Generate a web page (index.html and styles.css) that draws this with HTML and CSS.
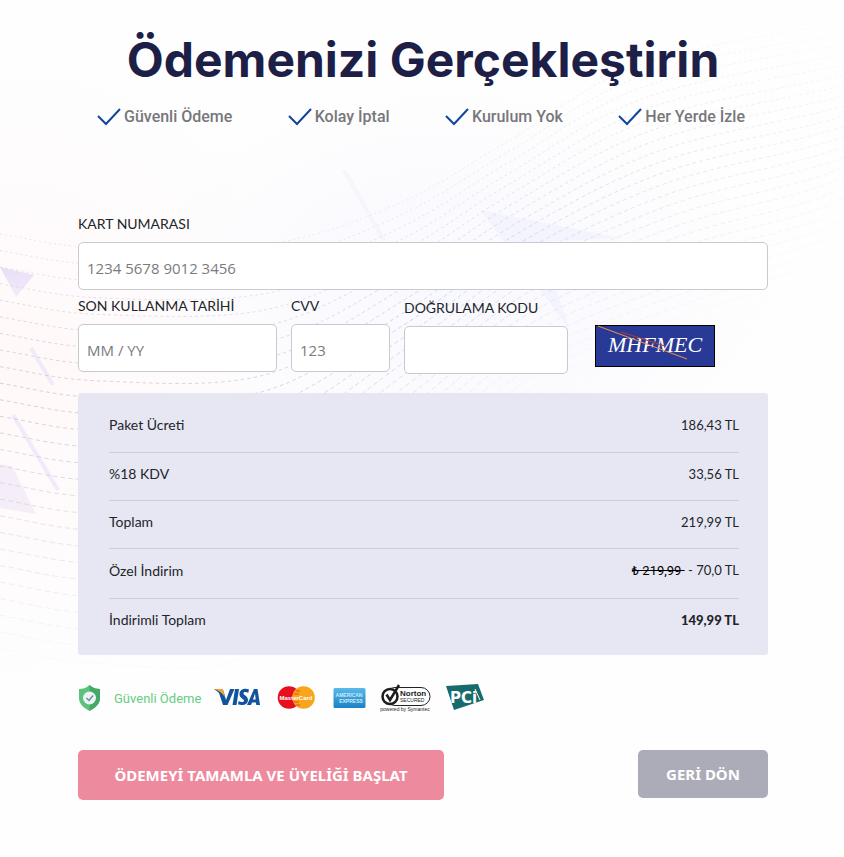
FILE: index.html
```html
<!DOCTYPE html>
<html lang="tr">
<head>
<meta charset="utf-8">
<meta name="viewport" content="width=device-width, initial-scale=1">
<title>Ödeme</title>
<link rel="stylesheet" href="styles.css">
</head>
<body>
<svg class="backdrop" viewBox="0 0 844 857" preserveAspectRatio="none" aria-hidden="true">
  <defs>
    <radialGradient id="glow"><stop offset="0" stop-color="#fff8f9"/><stop offset="1" stop-color="#fff8f9" stop-opacity="0"/></radialGradient>
    <radialGradient id="haze"><stop offset="0" stop-color="#f8f8ff"/><stop offset="1" stop-color="#f8f8ff" stop-opacity="0"/></radialGradient>
    <linearGradient id="fade" x1="0" y1="0" x2="0" y2="1"><stop offset="0" stop-color="#e4d9f6"/><stop offset="1" stop-color="#f3e9f8"/></linearGradient>
    <linearGradient id="line" gradientUnits="userSpaceOnUse" x1="0" y1="0" x2="844" y2="0"><stop offset="0" stop-color="#c5bfca"/><stop offset=".55" stop-color="#c9c9d6"/><stop offset=".8" stop-color="#dcdce8"/><stop offset="1" stop-color="#f1f1f5"/></linearGradient>
  </defs>
  <ellipse cx="20" cy="370" rx="300" ry="320" fill="url(#glow)"/>
  <ellipse cx="450" cy="290" rx="330" ry="210" fill="url(#haze)"/>
  <path d="M0 267 34 275 16 297Z" fill="url(#fade)" opacity=".85"/>
  <path d="M0 464 12 466 36 514 0 508Z" fill="#f3ebf9" opacity=".8"/>
  <path d="M31 348 53 385M13 415 58 490" stroke="#f1eafa" stroke-width="4"/>
  <path d="M344 170 384 241" stroke="#f6f5fc" stroke-width="4"/>
  <path d="M480 210 620 238 540 242 570 330Z" fill="#f1f3fd" opacity=".8"/>
  <g id="waves" fill="none" stroke="url(#line)"></g>
</svg>
<main class="page">
  <h1 class="title">Ödemenizi Gerçekleştirin</h1>
  <ul class="features">
    <li><svg class="tick" viewBox="0 0 24 18"><path d="M1 8 9 16 23 1"/></svg>Güvenli Ödeme</li>
    <li><svg class="tick" viewBox="0 0 24 18"><path d="M1 8 9 16 23 1"/></svg>Kolay İptal</li>
    <li><svg class="tick" viewBox="0 0 24 18"><path d="M1 8 9 16 23 1"/></svg>Kurulum Yok</li>
    <li><svg class="tick" viewBox="0 0 24 18"><path d="M1 8 9 16 23 1"/></svg>Her Yerde İzle</li>
  </ul>
  <form>
    <div class="field">
      <label for="card">KART NUMARASI</label>
      <input id="card" type="text" inputmode="numeric" placeholder="1234 5678 9012 3456">
    </div>
    <div class="fields">
      <div class="field">
        <label for="expiry">SON KULLANMA TARİHİ</label>
        <input id="expiry" type="text" placeholder="MM / YY">
      </div>
      <div class="field">
        <label for="cvv">CVV</label>
        <input id="cvv" type="text" placeholder="123">
      </div>
      <div class="field field-code">
        <label for="code">DOĞRULAMA KODU</label>
        <input id="code" type="text">
      </div>
      <svg class="captcha" viewBox="0 0 120 42">
        <rect x=".5" y=".5" width="119" height="41" fill="#283a96" stroke="#000"/>
        <text x="13" y="27" font-size="22">MHFMEC</text>
        <path d="M26 7 70 21" stroke="#b8393a"/>
        <path d="M3 1 92 34" stroke="#f0924a"/>
      </svg>
    </div>
    <div class="summary">
      <table>
        <tbody>
          <tr><th scope="row">Paket Ücreti</th><td>186,43 TL</td></tr>
          <tr><th scope="row">%18 KDV</th><td>33,56 TL</td></tr>
          <tr><th scope="row">Toplam</th><td>219,99 TL</td></tr>
          <tr class="discount"><th scope="row">Özel İndirim</th><td><s>₺ 219,99&nbsp;</s> - 70,0 TL</td></tr>
          <tr class="total"><th scope="row">İndirimli Toplam</th><td>149,99 TL</td></tr>
        </tbody>
      </table>
    </div>
    <svg class="logos" viewBox="0 0 408 30">
      <defs>
        <linearGradient id="amex" x1="0" y1="0" x2="0" y2="1"><stop offset="0" stop-color="#59b9e8"/><stop offset="1" stop-color="#1b80c4"/></linearGradient>
      </defs>
      <path d="M11.500 2C8 5 5 6 1 6V15C1 21 6 25 11.500 28 17 25 22 21 22 15V6C18 6 15 5 11.500 2Z" fill="#5cc17a"/>
      <path d="M11.500 2C15 5 18 6 22 6V15C22 21 17 25 11.500 28Z" fill="#46a866"/>
      <circle cx="11.500" cy="15" r="6.500" fill="#e9f3f6"/>
      <path d="M8.500 15 11 17.500 15 12.500" fill="none" stroke="#6f8d96" stroke-width="1.500"/>
      <text class="safe" x="36" y="20">Güvenli Ödeme</text>
      <path d="M136 6H143Q145 6 145.500 8L148 17 152 6H156.500L149.500 22H145L141 10Q139 8 136 6Z" fill="#12549b"/>
      <path d="M136 6H143Q145 6 145.500 8L147 14Q143 8 136 6Z" fill="#f3a532"/>
      <path d="M157 6H161L158.500 22H154.500Z" fill="#12549b"/>
      <path d="M171 6.500 170.300 9.800C167.500 8.600 165.500 9 165.500 10.500 165.500 12.300 170 12.800 170 17 170 22 164 23 160 21.300L160.700 18C163 19.300 166 19.300 166 17.700 166 15.800 161.500 15.500 161.500 11.300 161.500 6 167 4.800 171 6.500Z" fill="#12549b"/>
      <path d="M176 6H179.500L182 22H178.300L177.900 19.500H174L173 22H169ZM177 10.500 175 16.500H177.700Z" fill="#12549b" fill-rule="evenodd"/>
      <circle cx="211" cy="14.500" r="11.300" fill="#e60f1e"/><circle cx="225.500" cy="14.500" r="11.300" fill="#f9a51b"/>
      <path d="M218 8H222M216 11H221M215 19H221M218 22H222" stroke="#e8501d"/>
      <text class="mastercard" x="218" y="17" text-anchor="middle">MasterCard</text>
      <rect x="255.500" y="5" width="32" height="20" rx="1.500" fill="url(#amex)"/>
      <text class="amex" x="271" y="14" text-anchor="middle">AMERICAN</text>
      <text class="amex" x="273" y="20" text-anchor="middle">EXPRESS</text>
      <rect x="308" y="4.500" width="44" height="18" rx="9" fill="#fff" stroke="#222"/>
      <circle cx="312" cy="13.500" r="7.500" fill="#fff" stroke="#1d1d1f" stroke-width="2.500"/>
      <path d="M308.500 11.500 312 17 321 2" fill="none" stroke="#1d1d1f" stroke-width="2.500"/>
      <text class="norton" x="322" y="13">Norton</text>
      <text class="secured" x="322" y="19">SECURED</text>
      <text class="powered" x="327" y="28" text-anchor="middle">powered by Symantec</text>
      <path d="M368 3 400 1 406 17 376 27Z" fill="#176b6d"/>
      <path d="M397 6 402 17" stroke="#fff"/>
      <text class="pci" x="372" y="20">PCi</text>
    </svg>
    <div class="actions">
      <button class="submit" type="submit">ÖDEMEYİ TAMAMLA VE ÜYELİĞİ BAŞLAT</button>
      <button class="back" type="button">GERİ DÖN</button>
    </div>
  </form>
</main>
<script src="waves.js"></script>
</body>
</html>
```
FILE: styles.css
```css
* { box-sizing: border-box; }

body {
  margin: 0;
  min-height: 100vh;
  position: relative;
  background: #fefefe;
  color: #212529;
  font-family: Lato, sans-serif;
}

.backdrop {
  position: absolute;
  inset: 0;
  width: 100%;
  height: 100%;
}

.page {
  position: relative;
  max-width: 844px;
  margin: 0 auto;
  padding: 28px 76px 56px 78px;
}

.title {
  margin: 0;
  font: 700 48px/64px Inter, sans-serif;
  color: #1d1f47;
  text-align: center;
  white-space: nowrap;
}

.features {
  display: flex;
  justify-content: space-between;
  list-style: none;
  margin: 12px 0 0;
  padding: 0 23px 0 19px;
  font: 500 16px/26px Roboto, sans-serif;
  color: #77777b;
}

.features li { display: flex; align-items: center; gap: 3px; }

.tick {
  width: 24px;
  height: 18px;
  fill: none;
  stroke: #0f469c;
  stroke-width: 2;
}

form { margin-top: 84px; }

.field { display: flex; flex-direction: column; min-width: 0; }

label { font-size: 14px; line-height: 20px; margin-bottom: 8px; white-space: nowrap; }

input {
  width: 100%;
  height: 48px;
  padding: 3px 8px 0;
  border: 1px solid #c9c9ce;
  border-radius: 5px;
  background: #fff;
  font: 15px "Open Sans", sans-serif;
}

input::placeholder { color: #7b7b7f; opacity: 1; }

.fields {
  display: grid;
  grid-template-columns: 199fr 99fr 164fr 186fr;
  gap: 14px;
  margin-top: 6px;
}

.field-code { padding-top: 2px; }

.captcha { width: 120px; height: 42px; margin: 29px 0 0 13px; }
.captcha text { font-family: "Liberation Serif", serif; font-style: italic; fill: #fff; }

.summary {
  margin-top: 19px;
  padding: 11px 29px 13px 31px;
  border-radius: 3px;
  background: #e7e7f3;
}

table { width: 100%; border-collapse: collapse; font-size: 14px; line-height: 20px; }
th, td { height: 48px; padding: 0 0 5px; border-bottom: 1px solid #cdcddb; }
th { font-weight: 400; text-align: left; }
td { font-size: 13px; text-align: right; }
s { font-family: Roboto, sans-serif; color: #000; }
.discount th, .discount td { height: 50px; }
.total th, .total td { height: 44px; padding: 0; border: 0; }
.total td { font-weight: 900; }

.logos { display: block; width: 408px; height: 30px; margin-top: 28px; }
.safe { font: 13px Roboto, sans-serif; fill: #67cc83; }
.mastercard { font: 700 6px "Liberation Sans", sans-serif; fill: #fff; }
.amex { font: 700 5px "Liberation Sans", sans-serif; fill: #c9ebfa; }
.norton { font: 700 8px "Liberation Sans", sans-serif; fill: #222; }
.secured { font: 5px "Liberation Sans", sans-serif; fill: #222; }
.powered { font: 5px "Liberation Sans", sans-serif; fill: #222; }
.pci { font: 700 15px "DejaVu Sans", sans-serif; fill: #fff; }

.actions {
  display: flex;
  justify-content: space-between;
  align-items: flex-start;
  margin-top: 37px;
}

button {
  border: 0;
  border-radius: 5px;
  color: #fff;
  font: 700 15px "Noto Sans", sans-serif;
  white-space: nowrap;
}

.submit { width: 366px; height: 50px; background: #ed8a9e; }
.back { width: 130px; height: 48px; background: #acacb9; }
```
FILE: waves.js
```js
// Dashed wave lines, blended between an upper and a lower guide curve.
const upper = [[-80, 220], [0, 234], [100, 248], [270, 244], [400, 203], [505, 143], [640, 65], [844, 24], [960, 24]];
const lower = [[-80, 650], [0, 665], [100, 680], [250, 670], [410, 520], [540, 405], [700, 345], [844, 290], [960, 150]];
const count = 27;
const group = document.getElementById("waves");

for (let i = 0; i < count; i++) {
  const t = i / (count - 1);
  const p = upper.map((u, k) => u.map((v, a) => v + (lower[k][a] - v) * t));
  let d = `M${p[1]}`;
  for (let k = 1; k < p.length - 2; k++) {
    const c1 = [0, 1].map(a => p[k][a] + (p[k + 1][a] - p[k - 1][a]) / 6);
    const c2 = [0, 1].map(a => p[k + 1][a] - (p[k + 2][a] - p[k][a]) / 6);
    d += `C${c1} ${c2} ${p[k + 1]}`;
  }
  const path = document.createElementNS("http://www.w3.org/2000/svg", "path");
  path.setAttribute("d", d);
  path.setAttribute("stroke-dasharray", `${2 + 5 * t} 3`);
  path.setAttribute("opacity", Math.min(0.7, 0.35 + t, 1.1 * (1.03 - t)));
  group.append(path);
}
```
